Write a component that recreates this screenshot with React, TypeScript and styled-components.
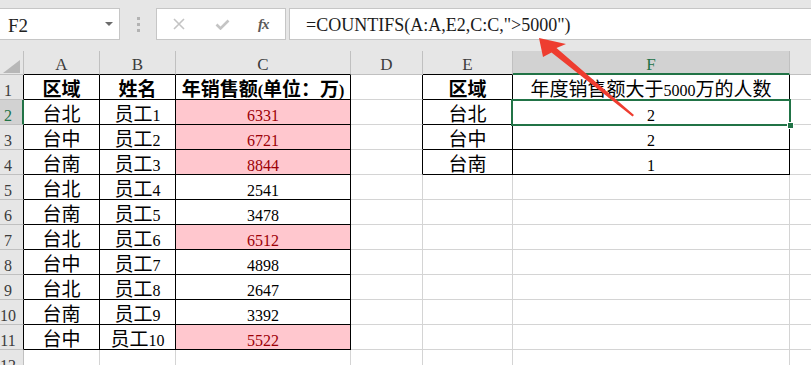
import React from "react";
import styled, { createGlobalStyle } from "styled-components";

const GRID = "#d4d4d4";
const BLACK = "#000";
const GREEN = "#217346";
const HEAD_LINE = "#c0c0c0";
const PINK = "#ffc7ce";
const DARK_RED = "#9c0006";

const GlobalStyle = createGlobalStyle`
  html, body { margin: 0; padding: 0; background: #fff; overflow: hidden; }
`;

const Page = styled.div`
  position: relative;
  width: 811px;
  height: 365px;
  overflow: hidden;
  font-family: "Liberation Serif", "Noto Sans CJK SC", serif;
  color: #000;
`;

const FormulaBar = styled.div`
  display: flex;
  align-items: flex-start;
  box-sizing: border-box;
  height: 51px;
  padding-top: 8px;
  background: #e6e6e6;
`;

const Box = styled.div`
  box-sizing: border-box;
  height: 32px;
  background: #fff;
  border: 1px solid #c6c6c6;
  display: flex;
  align-items: flex-end;
  line-height: 1;
`;

const NameBox = styled(Box)`
  width: 121px;
  margin-left: -1px;
  justify-content: space-between;
  padding: 0 6px 4px 8px;
  font-size: 19px;
  color: #222;
`;

const Caret = styled.span`
  width: 0;
  height: 0;
  margin-bottom: 9px;
  border-left: 4px solid transparent;
  border-right: 4px solid transparent;
  border-top: 4px solid #6b6b6b;
`;

const Grip = styled.div`
  width: 36px;
  height: 32px;
  display: flex;
  flex-direction: column;
  align-items: center;
  justify-content: center;
  gap: 3px;
  span {
    width: 3px;
    height: 3px;
    background: #b3b3b3;
  }
`;

const ButtonBox = styled(Box)`
  width: 130px;
  align-items: center;
  padding-left: 16px;
`;

const IconSlot = styled.div<{ $w: number }>`
  width: ${(p) => p.$w}px;
  display: flex;
  align-items: center;
`;

const Fx = styled.span`
  font-family: "Liberation Serif", serif;
  font-style: italic;
  font-weight: 700;
  font-size: 15px;
  color: #5a5a5a;
  letter-spacing: -1px;
`;

const FormulaBox = styled(Box)`
  flex: 1;
  margin-left: 3px;
  border-right: none;
  padding: 0 0 5px 16px;
  font-size: 18px;
  color: #1a1a1a;
`;

const Sheet = styled.div`
  display: grid;
  grid-template-columns: 24px 76px 76px 175px 72px 90px 277px 72px;
  grid-template-rows: 24px repeat(12, 25px);
`;

const Corner = styled.div`
  box-sizing: border-box;
  display: flex;
  align-items: flex-end;
  justify-content: flex-end;
  padding: 0 3px 1px 0;
  background: #e6e6e6;
  border-right: 1px solid ${HEAD_LINE};
  border-bottom: 1px solid ${HEAD_LINE};
`;

const CornerMark = styled.div`
  width: 17px;
  height: 13px;
  background: #b7b7b7;
  clip-path: polygon(100% 0, 100% 100%, 0 100%);
`;

const ColHead = styled.div<{ $active?: boolean; $bottom: string }>`
  box-sizing: border-box;
  display: flex;
  align-items: flex-end;
  justify-content: center;
  padding-bottom: ${(p) => (p.$active ? 0 : 1)}px;
  line-height: 1;
  font-size: 17px;
  color: ${(p) => (p.$active ? GREEN : "#3c3c3c")};
  background: ${(p) => (p.$active ? "#d2d2d2" : "#e6e6e6")};
  border-right: 1px solid ${HEAD_LINE};
  border-bottom: ${(p) => (p.$active ? `2px solid ${GREEN}` : `1px solid ${p.$bottom}`)};
`;

const RowHead = styled.div<{ $active?: boolean; $right: string }>`
  box-sizing: border-box;
  display: flex;
  align-items: flex-end;
  justify-content: center;
  padding: 0 ${(p) => (p.$active ? 6 : 7)}px 0 0;
  line-height: 1;
  font-size: 16px;
  color: ${(p) => (p.$active ? GREEN : "#3c3c3c")};
  background: ${(p) => (p.$active ? "#d2d2d2" : "#e6e6e6")};
  border-right: ${(p) => (p.$active ? `2px solid ${GREEN}` : `1px solid ${p.$right}`)};
  border-bottom: 1px solid ${HEAD_LINE};
`;

const Cell = styled.div<{
  $right: string;
  $bottom: string;
  $hot?: boolean;
  $bold?: boolean;
}>`
  box-sizing: border-box;
  display: flex;
  align-items: flex-end;
  justify-content: center;
  line-height: 1;
  font-size: 16px;
  font-weight: ${(p) => (p.$bold ? 700 : 400)};
  color: ${(p) => (p.$hot ? DARK_RED : "#000")};
  background: ${(p) => (p.$hot ? PINK : "#fff")};
  border-right: 1px solid ${(p) => p.$right};
  border-bottom: 1px solid ${(p) => p.$bottom};
`;

const Text = styled.span`
  white-space: nowrap;
`;

const Han = styled.span`
  font-family: "Noto Sans CJK SC", sans-serif;
  font-size: 19px;
`;

const Selection = styled.div`
  position: absolute;
  left: 511px;
  top: 99px;
  width: 280px;
  height: 27px;
  box-sizing: border-box;
  border: 2px solid ${GREEN};
  pointer-events: none;
`;

const FillHandle = styled.div`
  position: absolute;
  right: -5px;
  bottom: -5px;
  width: 5px;
  height: 5px;
  background: ${GREEN};
  border: 1px solid #fff;
`;

const Overlay = styled.svg`
  position: absolute;
  left: 0;
  top: 0;
  pointer-events: none;
`;

type Row = { a: string; b: string; c: string; hot?: boolean; e?: string; f?: string };

const rows: Row[] = [
  { a: "区域", b: "姓名", c: "年销售额(单位：万)", e: "区域", f: "年度销售额大于5000万的人数" },
  { a: "台北", b: "员工1", c: "6331", hot: true, e: "台北", f: "2" },
  { a: "台中", b: "员工2", c: "6721", hot: true, e: "台中", f: "2" },
  { a: "台南", b: "员工3", c: "8844", hot: true, e: "台南", f: "1" },
  { a: "台北", b: "员工4", c: "2541" },
  { a: "台南", b: "员工5", c: "3478" },
  { a: "台北", b: "员工6", c: "6512", hot: true },
  { a: "台中", b: "员工7", c: "4898" },
  { a: "台北", b: "员工8", c: "2647" },
  { a: "台南", b: "员工9", c: "3392" },
  { a: "台中", b: "员工10", c: "5522", hot: true },
  { a: "", b: "", c: "" },
];

const letters = ["A", "B", "C", "D", "E", "F", ""];

// rows 1..11 cols A..C, rows 1..4 cols E..F carry thin black borders
const inTable = (r: number, c: number) =>
  (r >= 1 && r <= 11 && c >= 1 && c <= 3) || (r >= 1 && r <= 4 && (c === 5 || c === 6));

const CJK = /([\u3000-\u9fff\uff00-\uffef]+)/;

const renderText = (s: string) =>
  s
    .split(CJK)
    .filter(Boolean)
    .map((part, i) =>
      CJK.test(part) ? <Han key={i}>{part}</Han> : <React.Fragment key={i}>{part}</React.Fragment>
    );

const cellText = (row: Row, c: number) =>
  c === 1 ? row.a : c === 2 ? row.b : c === 3 ? row.c : c === 5 ? row.e ?? "" : c === 6 ? row.f ?? "" : "";

export default function App() {
  return (
    <Page>
      <GlobalStyle />
      <FormulaBar>
        <NameBox>
          <span>F2</span>
          <Caret />
        </NameBox>
        <Grip>
          <span />
          <span />
          <span />
        </Grip>
        <ButtonBox>
          <IconSlot $w={42}>
            <svg width="12" height="12" viewBox="0 0 12 12">
              <path d="M1 1 L11 11 M11 1 L1 11" stroke="#c4c4c4" strokeWidth="1.6" fill="none" />
            </svg>
          </IconSlot>
          <IconSlot $w={43}>
            <svg width="15" height="11" viewBox="0 0 15 11">
              <path d="M1.5 5.5 L5.5 9.5 L13.5 1.5" stroke="#c4c4c4" strokeWidth="2.6" fill="none" />
            </svg>
          </IconSlot>
          <Fx>fx</Fx>
        </ButtonBox>
        <FormulaBox>=COUNTIFS(A:A,E2,C:C,"&gt;5000")</FormulaBox>
      </FormulaBar>

      <Sheet>
        <Corner>
          <CornerMark />
        </Corner>
        {letters.map((l, i) => (
          <ColHead key={l || i} $active={l === "F"} $bottom={inTable(1, i + 1) ? BLACK : HEAD_LINE}>
            {l}
          </ColHead>
        ))}
        {rows.map((row, ri) => {
          const r = ri + 1;
          return (
            <React.Fragment key={r}>
              <RowHead $active={r === 2} $right={inTable(r, 1) ? BLACK : HEAD_LINE}>
                {r}
              </RowHead>
              {[1, 2, 3, 4, 5, 6, 7].map((c) => {
                const text = cellText(row, c);
                return (
                  <Cell
                    key={c}
                    $right={inTable(r, c) || inTable(r, c + 1) ? BLACK : GRID}
                    $bottom={inTable(r, c) || inTable(r + 1, c) ? BLACK : GRID}
                    $hot={c === 3 && row.hot}
                    $bold={r === 1 && c !== 6}
                  >
                    {text && <Text>{renderText(text)}</Text>}
                  </Cell>
                );
              })}
            </React.Fragment>
          );
        })}
      </Sheet>

      <Selection>
        <FillHandle />
      </Selection>

      <Overlay width="811" height="365" viewBox="0 0 811 365">
        <polygon
          points="539,38 566,44 556.5,48 634,115 632.5,116.5 551.5,52.5 543,57"
          fill="#ee3d30"
        />
      </Overlay>
    </Page>
  );
}
